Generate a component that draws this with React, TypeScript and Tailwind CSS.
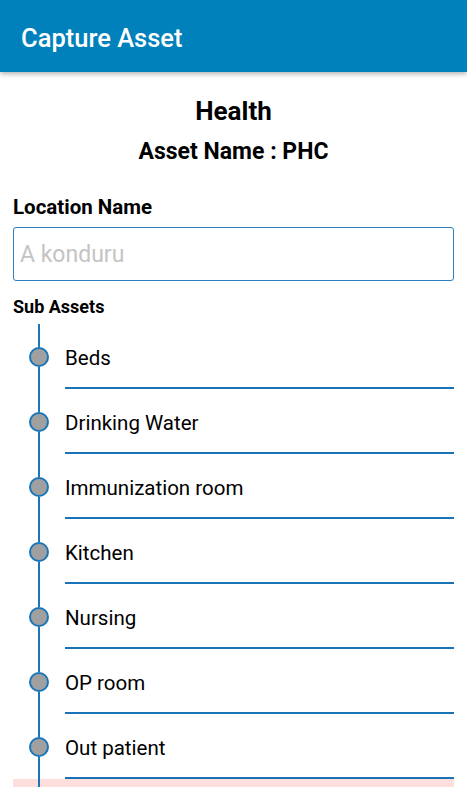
const SUB_ASSETS = ['Beds', 'Drinking Water', 'Immunization room', 'Kitchen', 'Nursing', 'OP room', 'Out patient']

function TimelineRow({ label, flagged }: { label?: string; flagged?: boolean }) {
  return (
    <div className={`flex h-[65px] shrink-0 ${flagged ? 'bg-[#ffdede]' : ''}`}>
      <div className="w-[52px] shrink-0 flex flex-col items-center">
        <div className="flex-1 w-[2px] bg-[#1a76b8]" />
        <div className="w-[20px] h-[20px] rounded-full border-2 border-[#1a76b8] bg-[#a0a0a0] shrink-0" />
        <div className="flex-1 w-[2px] bg-[#1a76b8]" />
      </div>
      <div className="flex-1 flex items-center pt-[5px] border-b-2 border-[#1a73b5] text-[20.5px] text-black">
        {label}
      </div>
    </div>
  )
}

export default function App() {
  return (
    <div className="h-[800px] w-full flex flex-col bg-white overflow-hidden" style={{ fontFamily: 'Roboto, "Liberation Sans", sans-serif' }}>
      <header className="h-[72px] shrink-0 bg-[#0181bb] flex items-center px-[21px] shadow-[0_2px_5px_rgba(0,0,0,0.3)] relative z-10">
        <h1 className="text-white text-[25.5px] font-medium pt-[4px]">Capture Asset</h1>
      </header>

      <main className="flex-1 overflow-hidden px-[13px]">
        <h2 className="mt-[25px] text-center text-[26px] leading-[28px] font-bold text-black">Health</h2>
        <h3 className="mt-[14px] text-center text-[23px] leading-[26px] font-bold text-black">Asset Name : PHC</h3>

        <div className="mt-[30px] text-[20.5px] leading-[24px] font-bold text-black">Location Name</div>
        <input
          className="mt-[8px] w-full h-[54px] border border-[#2a80c0] rounded-[3px] px-[6px] text-[23px] text-black placeholder:text-[#c4c4c4] outline-none"
          placeholder="A konduru"
        />

        <div className="mt-[16px] text-[18px] leading-[20px] font-bold text-black">Sub Assets</div>

        <div className="mt-[7px] flex flex-col">
          {SUB_ASSETS.map((s) => (
            <TimelineRow key={s} label={s} />
          ))}
          <TimelineRow flagged />
        </div>
      </main>
      <div className="h-[13px] shrink-0" />
    </div>
  )
}
